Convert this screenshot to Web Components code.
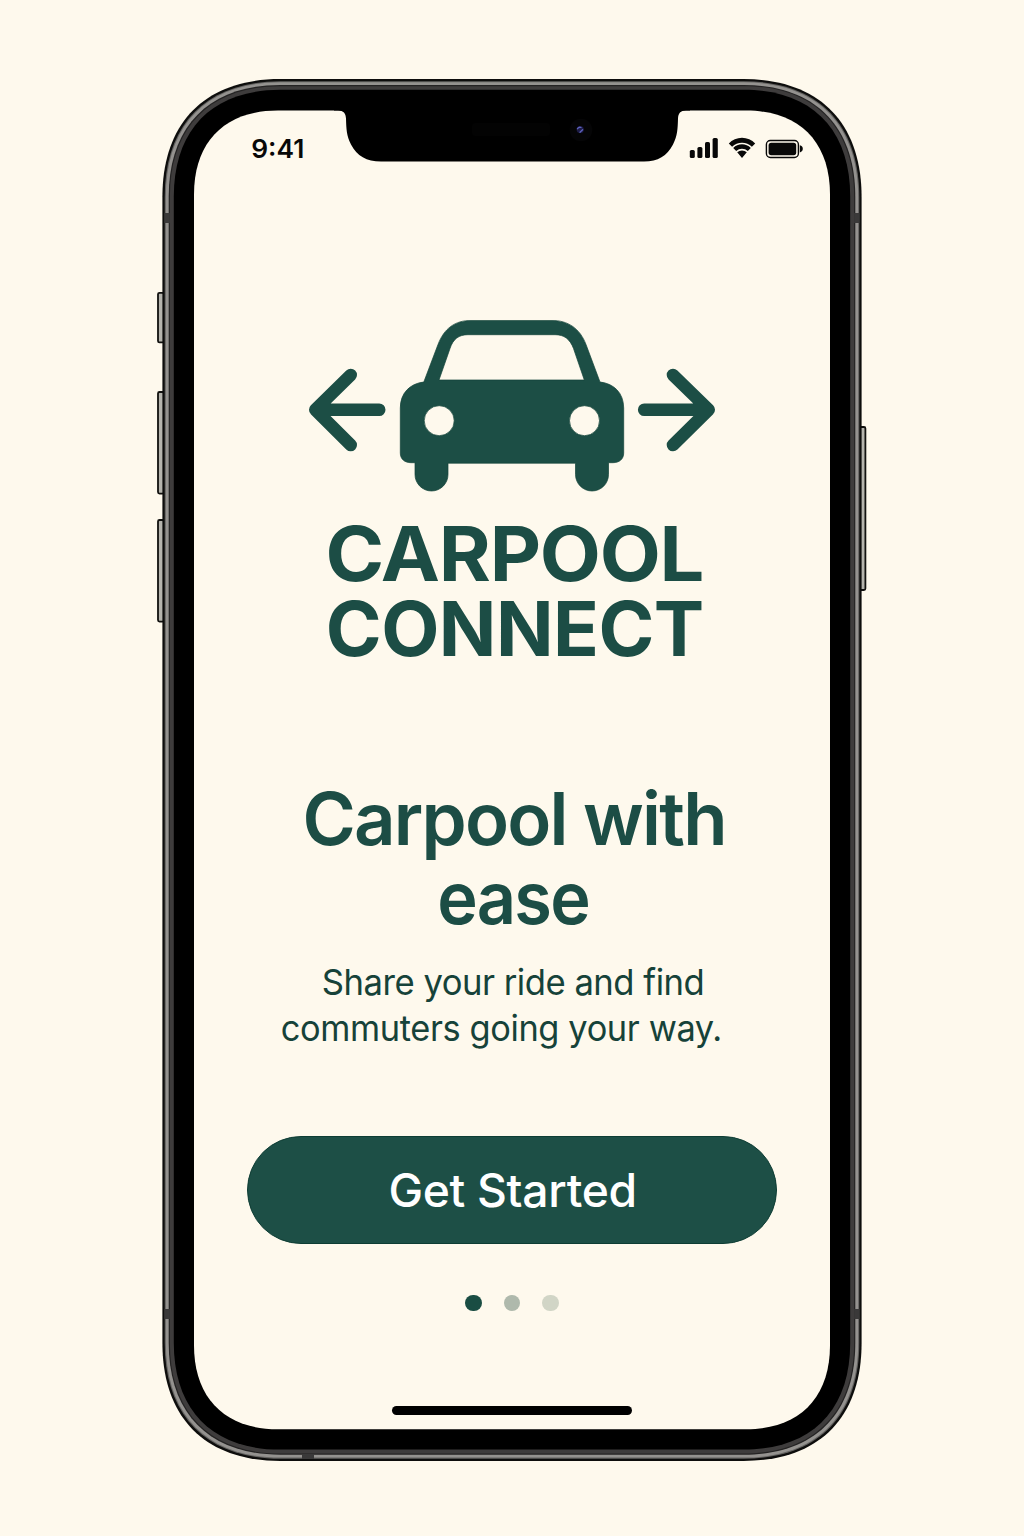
<!DOCTYPE html>
<html lang="en">
<head>
<meta charset="utf-8">
<title>Carpool Connect</title>
<style>
html,body{margin:0;padding:0}
body{width:1024px;height:1536px;overflow:hidden;background:#fef9ed;font-family:Inter,"Liberation Sans",sans-serif;color:#1c4d45}
</style>
</head>
<body>
<phone-frame>
  <status-bar slot="status" time="9:41"></status-bar>
  <welcome-screen></welcome-screen>
</phone-frame>
<script>
// One line of text, `width` pixels wide: `track` sets letter spacing, the glyphs are stretched for the rest.
customElements.define('fit-line', class extends HTMLElement{
  connectedCallback(){
    if(this.shadowRoot) return;
    const r=this.attachShadow({mode:'open'});
    const get=(n,d)=>+(this.getAttribute(n)||d);
    const w=get('width',100), size=get('size',16), weight=get('weight',400), lh=get('line',20), shift=get('shift',0), track=get('track',0), bearing=get('bearing',.03)*size;
    r.innerHTML=`<style>:host{display:block;width:${w}px;height:${lh}px;line-height:${lh}px;margin-left:${shift}px;font-size:${size}px;font-weight:${weight};white-space:pre;letter-spacing:${track}px}
    span{display:inline-block;height:${lh}px;transform-origin:0 0}</style><span></span>`;
    const s=r.querySelector('span');
    s.textContent=this.getAttribute('text');
    const k=w/(s.getBoundingClientRect().width-track-2*bearing);
    s.style.transform=`translateX(${-bearing*k}px) scaleX(${k})`;
  }
});

customElements.define('phone-frame', class extends HTMLElement{
  connectedCallback(){
    // Continuous-curvature rounded rectangle
    const sq=(x1,y1,x2,y2,L,k)=>`M${x1} ${y1+L}C${x1} ${y1+k} ${x1+k} ${y1} ${x1+L} ${y1}H${x2-L}C${x2-k} ${y1} ${x2} ${y1+k} ${x2} ${y1+L}V${y2-L}C${x2} ${y2-k} ${x2-k} ${y2} ${x2-L} ${y2}H${x1+L}C${x1+k} ${y2} ${x1} ${y2-k} ${x1} ${y2-L}Z`;
    const ring=(i,f)=>`<path d="${sq(162.4+i,79+i*.95,861.6-i,1461-i,118-i,43-i*.35)}" fill="${f}"/>`;
    const key=(x,y,h,w)=>`<rect x="${x}" y="${y}" width="${w}" height="${h}" rx="1.5" fill="#b5b4ad" stroke="#11110f" stroke-width="1.8"/>`;
    this.attachShadow({mode:'open'}).innerHTML=`<style>
      :host{display:grid;width:1024px;height:1536px}
      svg,.screen{grid-area:1/1}
      svg{display:block}
      .screen{z-index:1;box-sizing:border-box;margin:110px 194px 106px;display:flex;flex-direction:column}
    </style>
    <svg width="1024" height="1536" viewBox="0 0 1024 1536" aria-hidden="true">
      ${key(158,292.8,49.6,6)}${key(158,392,101.6,6)}${key(158,520,101.6,6)}${key(859,427,163,6.4)}
      ${ring(0,'#0d0d0c')}${ring(2.3,'#62615f')}${ring(3.4,'#94928f')}${ring(6.3,'#242323')}${ring(7.5,'#3e3c3c')}
      <g fill="#3a3939"><path d="M164.4 213h5.5v10h-5.5zM854.1 213h5.5v10h-5.5zM164.4 1309h5.5v10h-5.5zM854.1 1309h5.5v10h-5.5zM302 1454h12v5h-12z"/></g>
      ${ring(11.4,'#000')}
      <path d="${sq(194,110.6,830,1429.3,84,31)}" fill="#fef9ed"/>
      <path d="M334 109V110.6H338C343.5 110.6 345.8 113.5 346 118.5C346.3 129 346.5 136 351 144.5C357 156 366.5 161.6 381 161.6H644C658 161.6 667 156 673 144.5C677.5 136 677.7 129 678 118.5C678.2 113.5 680.5 110.6 686 110.6H690V109Z"/>
      <rect x="472" y="123" width="78" height="13" rx="3" fill="#030303"/>
      <circle cx="581" cy="130" r="11.3" fill="#050506"/>
      <circle cx="580.2" cy="129.5" r="3.6" fill="#1d1c46"/>
      <path d="M577.5 128.7q1.5-2 3.5-1.2M580 132.2l2.6-2.4" fill="none" stroke="#5e62bd" stroke-width="1.3" stroke-linecap="round"/>
    </svg>
    <div class="screen"><slot name="status"></slot><slot></slot></div>`;
  }
});

customElements.define('status-bar', class extends HTMLElement{
  connectedCallback(){
    this.attachShadow({mode:'open'}).innerHTML=`<style>
      :host{display:flex;justify-content:space-between;align-items:flex-start;height:76px;box-sizing:border-box;padding:22px 26px 0 58px;color:#080808}
      svg{display:block;margin-top:4px}
    </style>
    <fit-line text="${this.getAttribute('time')}" width="51.5" size="26" weight="600" line="33" bearing=".03"></fit-line>
    <svg width="116" height="24" viewBox="688 136 116 24" aria-hidden="true" fill="#080808">
      <rect x="689.8" y="150" width="5" height="8" rx="1.6"/><rect x="697.4" y="147" width="5" height="11" rx="1.6"/><rect x="705" y="142" width="5" height="16" rx="1.6"/><rect x="712.6" y="138" width="5.2" height="20" rx="1.6"/>
      <path d="M728.8 143.4A18 18 0 0 1 755.2 143.4L751.9 146.7A14.4 14.4 0 0 0 732.1 146.7ZM733.2 147.9A12.6 12.6 0 0 1 750.8 147.9L747.8 151A8.7 8.7 0 0 0 736.2 151ZM737.2 152.3A7 7 0 0 1 746.8 152.3L742 157.9Z"/>
      <rect x="766.4" y="140.5" width="32" height="17" rx="4" fill="none" stroke="#080808" stroke-width="1.4"/>
      <rect x="768.6" y="142.8" width="27.6" height="12.4" rx="2.6"/>
      <path d="M799.8 145.2q3 .8 3 3.6t-3 3.6z"/>
    </svg>`;
  }
});

customElements.define('carpool-logo', class extends HTMLElement{
  connectedCallback(){
    this.attachShadow({mode:'open'}).innerHTML=`<style>
      :host{display:flex;flex-direction:column;align-items:center}
      svg{display:block;margin-bottom:24px}
    </style>
    <svg width="408" height="172" viewBox="308 320 408 172" aria-hidden="true">
      <path fill="#1c4e45" stroke="#12433a" stroke-width=".7" fill-rule="evenodd" d="M423.8 382L438 344.5C444 328.5 455 320.4 471 320.4H552C568 320.4 580 328.5 586 344.5L600 382C614 383.5 623.7 393 623.7 408V453C623.7 459 619.5 462.7 613 462.7H608.5V474.5A16.5 16.5 0 0 1 575.5 474.5V463.2H448V474.5A16.5 16.5 0 0 1 415 474.5V462.7H411C404.5 462.7 400.3 459 400.3 453V408C400.3 393 410 383.5 423.8 382ZM439 380H584.3L573.5 348.5C570 339 564 334.7 555 334.7H468C459 334.7 453 339 450 348.5ZM454.2 420.7A15 15 0 1 0 424.2 420.7A15 15 0 1 0 454.2 420.7ZM599.5 420.7A15 15 0 1 0 569.5 420.7A15 15 0 1 0 599.5 420.7Z"/>
      <g fill="none" stroke="#1c4e45" stroke-width="12.6" stroke-linecap="round" stroke-linejoin="round">
        <path d="M350.7 375L315.3 409.7L350.7 445M318 409.7H379.2M673 375L708.7 409.7L673 445M706 409.7H644.2"/>
      </g>
    </svg>
    <fit-line text="CARPOOL" width="374" size="75.5" weight="700" line="75" shift="6" track="-1.2" bearing=".03"></fit-line>
    <fit-line text="CONNECT" width="374" size="75.5" weight="700" line="75" shift="6" track="-.5" bearing=".03"></fit-line>`;
  }
});

customElements.define('pill-button', class extends HTMLElement{
  connectedCallback(){
    this.attachShadow({mode:'open'}).innerHTML=`<style>
      :host{display:block}
      button{display:flex;align-items:center;justify-content:center;width:530px;height:108px;border:1px solid #0e3d34;border-radius:54px;background:#1d4f46;color:#fff;font-family:inherit;padding:0;margin:0}
    </style><button><fit-line text="${this.getAttribute('label')}" width="245.5" size="46" weight="530" line="54" shift="1" bearing=".035" track="-.3"></fit-line></button>`;
  }
});

customElements.define('page-dots', class extends HTMLElement{
  connectedCallback(){
    this.attachShadow({mode:'open'}).innerHTML=`<style>
      :host{display:flex;gap:22px}
      i{width:16.5px;height:16.5px;border-radius:50%;background:#afb9ac}
      i:first-of-type{background:#1a4d43}i:last-of-type{background:#d1d5c6}
    </style><i></i><i></i><i></i>`;
  }
});

customElements.define('welcome-screen', class extends HTMLElement{
  connectedCallback(){
    this.attachShadow({mode:'open'}).innerHTML=`<style>
      :host{display:flex;flex-direction:column;align-items:center;flex:1;padding-top:134px}
      h1,p{margin:0;display:flex;flex-direction:column;align-items:center}
      h1{margin-top:113px}
      p{margin-top:23px;color:#164239}
      pill-button{margin-top:84px}
      page-dots{margin-top:50.5px}
      .home{width:240px;height:9px;border-radius:5px;background:#000;margin-top:95px}
    </style>
    <carpool-logo></carpool-logo>
    <h1><fit-line text="Carpool with" width="420" size="72.5" weight="600" line="79" shift="6" bearing=".035" track="-1.8"></fit-line>
    <fit-line text="ease" width="150" size="72.5" weight="600" line="79" shift="3" bearing=".025" track="-1.8"></fit-line></h1>
    <p><fit-line text="Share your ride and find" width="380.5" size="35.5" weight="420" line="46" shift="3" bearing=".035" track="-.5"></fit-line>
    <fit-line text="commuters going your way." width="439" size="35.5" weight="420" line="46" shift="-21" bearing=".035" track="-.4"></fit-line></p>
    <pill-button label="Get Started"></pill-button>
    <page-dots></page-dots>
    <div class="home"></div>`;
  }
});
</script>
</body>
</html>
